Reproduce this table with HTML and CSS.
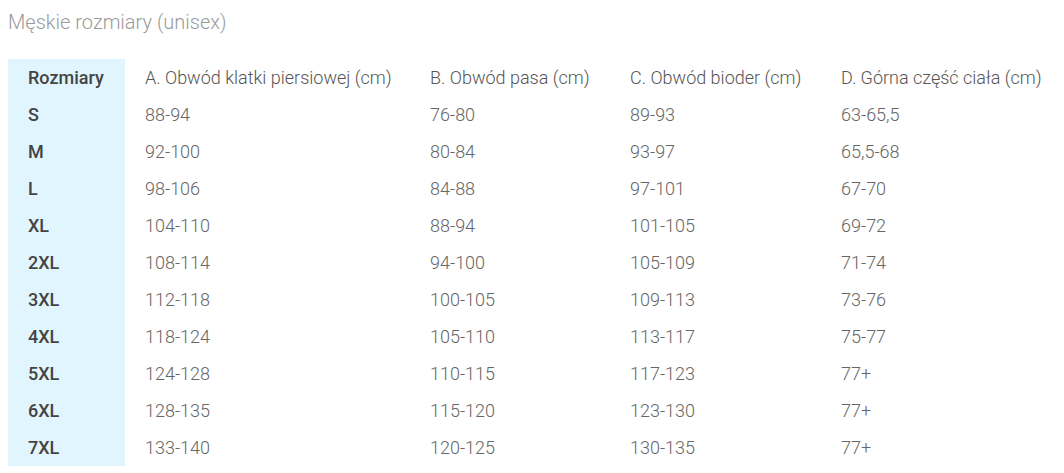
FILE: index.html
```html
<!DOCTYPE html>
<html lang="pl">
<head>
<meta charset="utf-8">
<link rel="stylesheet" href="styles.css">
</head>
<body>
<div class="page">
  <h3 class="title">Męskie rozmiary (unisex)</h3>
  <table class="sizes">
    <colgroup>
      <col class="c0"><col class="c1"><col class="c2"><col class="c3"><col class="c4">
    </colgroup>
    <thead>
      <tr><th class="size">Rozmiary</th><th>A. Obwód klatki piersiowej (cm)</th><th>B. Obwód pasa (cm)</th><th>C. Obwód bioder (cm)</th><th>D. Górna część ciała (cm)</th></tr>
    </thead>
    <tbody>
      <tr><td class="size">S</td><td>88-94</td><td>76-80</td><td>89-93</td><td>63-65,5</td></tr>
      <tr><td class="size">M</td><td>92-100</td><td>80-84</td><td>93-97</td><td>65,5-68</td></tr>
      <tr><td class="size">L</td><td>98-106</td><td>84-88</td><td>97-101</td><td>67-70</td></tr>
      <tr><td class="size">XL</td><td>104-110</td><td>88-94</td><td>101-105</td><td>69-72</td></tr>
      <tr><td class="size">2XL</td><td>108-114</td><td>94-100</td><td>105-109</td><td>71-74</td></tr>
      <tr><td class="size">3XL</td><td>112-118</td><td>100-105</td><td>109-113</td><td>73-76</td></tr>
      <tr><td class="size">4XL</td><td>118-124</td><td>105-110</td><td>113-117</td><td>75-77</td></tr>
      <tr><td class="size">5XL</td><td>124-128</td><td>110-115</td><td>117-123</td><td>77+</td></tr>
      <tr><td class="size">6XL</td><td>128-135</td><td>115-120</td><td>123-130</td><td>77+</td></tr>
      <tr><td class="size">7XL</td><td>133-140</td><td>120-125</td><td>130-135</td><td>77+</td></tr>
    </tbody>
  </table>
</div>
</body>
</html>
```

FILE: styles.css
```css
html, body {
  margin: 0;
  padding: 0;
  background: #ffffff;
  overflow: hidden;
}
.page {
  padding: 10px 0 0 8px;
  font-family: Roboto, "Liberation Sans", sans-serif;
}
.title {
  margin: 0 0 25px 0;
  font-size: 20px;
  font-weight: 300;
  line-height: 24px;
  color: #9a9a9a;
}
.sizes {
  border-collapse: collapse;
  table-layout: fixed;
  width: 1056px;
}
.c0 { width: 117px; }
.c1 { width: 285px; }
.c2 { width: 200px; }
.c3 { width: 211px; }
.c4 { width: 243px; }
.sizes th,
.sizes td {
  height: 37px;
  padding: 0 0 0 20px;
  text-align: left;
  vertical-align: middle;
  font-size: 18px;
  font-weight: 300;
  color: #555555;
  white-space: nowrap;
}
.sizes td { color: #666666; }
.sizes .size {
  background: #e1f5fe;
  font-weight: 500;
  color: #444444;
}
```
